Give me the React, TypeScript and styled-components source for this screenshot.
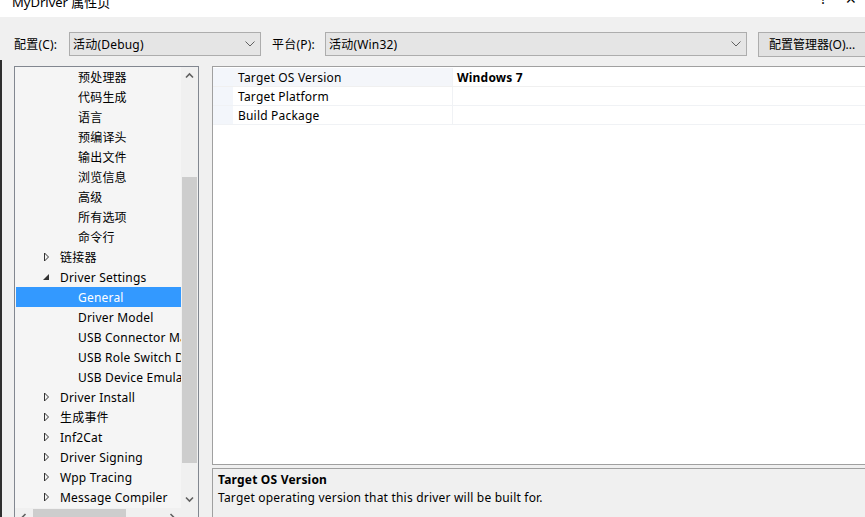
import React from "react";
import styled, { createGlobalStyle } from "styled-components";

const Global = createGlobalStyle`
  html, body { margin: 0; padding: 0; background: #f0f0f0; }
  body { font-family: "Noto Sans", "Noto Sans CJK SC", sans-serif; font-size: 12px; letter-spacing: 0.2px; color: #000; }
  * { box-sizing: border-box; }
`;

const Window = styled.div`
  width: 865px;
  height: 517px;
  overflow: hidden;
  background: #f0f0f0;
  display: flex;
  flex-direction: column;
`;

const TitleBar = styled.div`
  height: 17px;
  flex: none;
  background: #fff;
  display: flex;
  align-items: flex-end;
  position: relative;
  overflow: hidden;
`;

const TitleText = styled.div`
  font-size: 13px;
  letter-spacing: 0;
  line-height: 18px;
  margin-left: 12px;
  margin-bottom: 6px;
  color: #000;
`;

const TitleButtons = styled.div`
  margin-left: auto;
  display: flex;
  gap: 18px;
  margin-right: 8px;
  margin-bottom: 8px;
  font-size: 14px;
  line-height: 20px;
`;

const Body = styled.div`
  flex: 1;
  display: flex;
  flex-direction: column;
  min-height: 0;
`;

const Toolbar = styled.div`
  display: flex;
  align-items: center;
  height: 24px;
  margin-top: 15px;
  padding-left: 14px;
`;

const Label = styled.span<{ $w: number }>`
  width: ${(p) => p.$w}px;
  flex: none;
  white-space: nowrap;
`;

const Select = styled.div<{ $w: number }>`
  width: ${(p) => p.$w}px;
  height: 24px;
  flex: none;
  border: 1px solid #adadad;
  background: #e5e5e5;
  display: flex;
  align-items: center;
  padding-left: 3px;
  padding-right: 5px;
`;

const SelectText = styled.span`
  flex: 1;
`;

const Button = styled.div`
  margin-left: 11px;
  height: 25px;
  width: 115px;
  flex: none;
  border: 1px solid #adadad;
  background: #e1e1e1;
  display: flex;
  align-items: center;
  padding-left: 10px;
  white-space: nowrap;
  letter-spacing: 0;
`;

const Main = styled.div`
  flex: 1;
  display: flex;
  margin-top: 4px;
  padding-top: 6px;
  padding-left: 12px;
  border-left: 2px solid #2f2f2f;
  gap: 13px;
  min-height: 0;
`;

const TreePanel = styled.div`
  width: 185px;
  flex: none;
  border: 1px solid #828790;
  border-bottom: none;
  background: #f5f5f5;
  display: grid;
  grid-template-columns: 1fr 17px;
  grid-template-rows: 441px 17px;
  overflow: hidden;
`;

const TreeList = styled.div`
  overflow: hidden;
  padding-left: 1px;
`;

const TreeRow = styled.div<{ $level: number; $selected?: boolean }>`
  height: 20px;
  display: flex;
  align-items: center;
  white-space: nowrap;
  overflow: hidden;
  padding-left: ${(p) => (p.$level === 0 ? 27 : 62)}px;
  background: ${(p) => (p.$selected ? "#3399ff" : "transparent")};
  color: ${(p) => (p.$selected ? "#fff" : "#000")};
`;

const Arrow = styled.span`
  width: 17px;
  flex: none;
  display: flex;
  align-items: center;
`;

const VScroll = styled.div`
  background: #f0f0f0;
  display: flex;
  flex-direction: column;
  align-items: center;
`;

const ScrollBtn = styled.div`
  height: 17px;
  width: 17px;
  flex: none;
  display: flex;
  align-items: center;
  justify-content: center;
`;

const VTrack = styled.div`
  flex: 1;
  width: 100%;
  display: flex;
  flex-direction: column;
  padding: 93px 1px 0 1px;
`;

const VThumb = styled.div`
  height: 286px;
  background: #cdcdcd;
`;

const HScroll = styled.div`
  background: #f0f0f0;
  display: flex;
  align-items: flex-start;
  border-top: 1px solid #f0f0f0;
`;

const HThumb = styled.div`
  margin-left: 1px;
  width: 93px;
  height: 15px;
  background: #cdcdcd;
`;

const Corner = styled.div`
  background: #f0f0f0;
`;

const Right = styled.div`
  flex: 1;
  display: flex;
  flex-direction: column;
  gap: 3px;
  min-width: 0;
`;

const Grid = styled.div`
  height: 399px;
  flex: none;
  background: #fff;
  border: 1px solid #a0a0a0;
  border-right: none;
  padding-top: 1px;
`;

const GridRow = styled.div<{ $active?: boolean }>`
  height: 19px;
  display: grid;
  grid-template-columns: 20px 220px 1fr;
  border-bottom: 1px solid ${(p) => (p.$active ? "#f0f0f0" : "#f0f2f5")};
`;

const Margin = styled.div`
  background: #f3f6fb;
`;

const NameCell = styled.div<{ $active?: boolean }>`
  padding-left: 5px;
  display: flex;
  align-items: center;
  background: ${(p) => (p.$active ? "#f4f6fa" : "#fff")};
  border-right: 1px solid #f0f2f5;
`;

const ValueCell = styled.div`
  padding-left: 4px;
  display: flex;
  align-items: center;
  font-weight: 700;
`;

const Desc = styled.div`
  flex: 1;
  border: 1px solid #a0a0a0;
  border-right: none;
  border-bottom: none;
  background: #f0f0f0;
  padding: 2px 5px;
`;

const DescTitle = styled.div`
  font-weight: 700;
  line-height: 18px;
`;

const DescText = styled.div`
  line-height: 18px;
`;

const Chevron = ({ dir }: { dir: "up" | "down" | "left" | "right" }) => {
  const rot = { up: 0, down: 180, left: 270, right: 90 }[dir];
  return (
    <svg width="9" height="9" viewBox="0 0 9 9" style={{ transform: `rotate(${rot}deg)` }}>
      <path d="M1 6.5 L4.5 3 L8 6.5" fill="none" stroke="#606060" strokeWidth="1.6" />
    </svg>
  );
};

const DropChevron = () => (
  <svg width="10" height="6" viewBox="0 0 10 6">
    <path d="M0.5 0.5 L5 5 L9.5 0.5" fill="none" stroke="#606060" strokeWidth="1" />
  </svg>
);

const Collapsed = () => (
  <svg width="7" height="10" viewBox="0 0 7 10">
    <path d="M1.5 1 L5.5 5 L1.5 9 Z" fill="none" stroke="#333" strokeWidth="1" />
  </svg>
);

const Expanded = () => (
  <svg width="7" height="10" viewBox="0 0 7 10">
    <path d="M6 2 L6 8 L0 8 Z" fill="#333" />
  </svg>
);

type Node = { label: string; level: number; state?: "open" | "closed"; selected?: boolean };

const nodes: Node[] = [
  { label: "预处理器", level: 1 },
  { label: "代码生成", level: 1 },
  { label: "语言", level: 1 },
  { label: "预编译头", level: 1 },
  { label: "输出文件", level: 1 },
  { label: "浏览信息", level: 1 },
  { label: "高级", level: 1 },
  { label: "所有选项", level: 1 },
  { label: "命令行", level: 1 },
  { label: "链接器", level: 0, state: "closed" },
  { label: "Driver Settings", level: 0, state: "open" },
  { label: "General", level: 1, selected: true },
  { label: "Driver Model", level: 1 },
  { label: "USB Connector Manager", level: 1 },
  { label: "USB Role Switch Driver", level: 1 },
  { label: "USB Device Emulation", level: 1 },
  { label: "Driver Install", level: 0, state: "closed" },
  { label: "生成事件", level: 0, state: "closed" },
  { label: "Inf2Cat", level: 0, state: "closed" },
  { label: "Driver Signing", level: 0, state: "closed" },
  { label: "Wpp Tracing", level: 0, state: "closed" },
  { label: "Message Compiler", level: 0, state: "closed" },
];

const props = [
  { name: "Target OS Version", value: "Windows 7", active: true },
  { name: "Target Platform", value: "" },
  { name: "Build Package", value: "" },
];

export default function App() {
  return (
    <>
      <Global />
      <Window>
        <TitleBar>
          <TitleText>MyDriver 属性页</TitleText>
          <TitleButtons>
            <span>?</span>
            <span>✕</span>
          </TitleButtons>
        </TitleBar>
        <Body>
          <Toolbar>
            <Label $w={55}>配置(C):</Label>
            <Select $w={192}>
              <SelectText>活动(Debug)</SelectText>
              <DropChevron />
            </Select>
            <Label $w={53} style={{ marginLeft: 11 }}>平台(P):</Label>
            <Select $w={422}>
              <SelectText>活动(Win32)</SelectText>
              <DropChevron />
            </Select>
            <Button>配置管理器(O)...</Button>
          </Toolbar>
          <Main>
            <TreePanel>
              <TreeList>
                {nodes.map((n) => (
                  <TreeRow key={n.label} $level={n.level} $selected={n.selected}>
                    {n.level === 0 && (
                      <Arrow>{n.state === "open" ? <Expanded /> : <Collapsed />}</Arrow>
                    )}
                    {n.label}
                  </TreeRow>
                ))}
              </TreeList>
              <VScroll>
                <ScrollBtn>
                  <Chevron dir="up" />
                </ScrollBtn>
                <VTrack>
                  <VThumb />
                </VTrack>
                <ScrollBtn>
                  <Chevron dir="down" />
                </ScrollBtn>
              </VScroll>
              <HScroll>
                <ScrollBtn>
                  <Chevron dir="left" />
                </ScrollBtn>
                <HThumb />
                <ScrollBtn style={{ marginLeft: "auto" }}>
                  <Chevron dir="right" />
                </ScrollBtn>
              </HScroll>
              <Corner />
            </TreePanel>
            <Right>
              <Grid>
                {props.map((p) => (
                  <GridRow key={p.name} $active={p.active}>
                    <Margin />
                    <NameCell $active={p.active}>{p.name}</NameCell>
                    <ValueCell>{p.value}</ValueCell>
                  </GridRow>
                ))}
              </Grid>
              <Desc>
                <DescTitle>Target OS Version</DescTitle>
                <DescText>Target operating version that this driver will be built for.</DescText>
              </Desc>
            </Right>
          </Main>
        </Body>
      </Window>
    </>
  );
}
